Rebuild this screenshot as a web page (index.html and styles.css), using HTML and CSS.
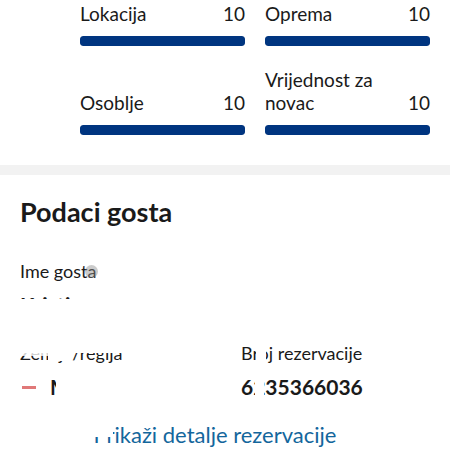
FILE: index.html
```html
<!DOCTYPE html>
<html lang="hr">
<head>
<meta charset="utf-8">
<title>Podaci gosta</title>
<link rel="stylesheet" href="styles.css">
</head>
<body>
<div class="page">
  <section class="ratings">
    <div class="rating">
      <div class="rating-head"><span class="rating-name">Lokacija</span><span class="rating-score">10</span></div>
      <div class="bar"><div class="bar-fill" style="width:100%"></div></div>
    </div>
    <div class="rating">
      <div class="rating-head"><span class="rating-name">Oprema</span><span class="rating-score">10</span></div>
      <div class="bar"><div class="bar-fill" style="width:100%"></div></div>
    </div>
    <div class="rating">
      <div class="rating-head"><span class="rating-name">Osoblje</span><span class="rating-score">10</span></div>
      <div class="bar"><div class="bar-fill" style="width:100%"></div></div>
    </div>
    <div class="rating">
      <div class="rating-head"><span class="rating-name">Vrijednost za novac</span><span class="rating-score">10</span></div>
      <div class="bar"><div class="bar-fill" style="width:100%"></div></div>
    </div>
  </section>

  <div class="divider"></div>

  <section class="guest">
    <h2 class="guest-title">Podaci gosta</h2>
    <div class="details">
      <div class="detail">
        <div class="detail-label">Ime gosta</div>
        <div class="detail-value">Kristina</div>
      </div>
      <div class="detail"></div>
      <div class="detail">
        <div class="detail-label">Zemlja/regija</div>
        <div class="detail-value"><span class="flag"></span>Mađarska</div>
      </div>
      <div class="detail">
        <div class="detail-label">Broj rezervacije</div>
        <div class="detail-value">6235366036</div>
      </div>
    </div>
    <div class="link-row"><a class="details-link" href="#">Prikaži detalje rezervacije</a></div>

    <div class="erase erase-a"></div>
    <div class="erase erase-a2"></div>
    <div class="erase erase-b"></div>
    <div class="erase erase-c"></div>
    <div class="erase erase-d"></div>
    <div class="erase erase-d2"></div>
    <div class="erase erase-e"></div>
    <div class="touch-dot"></div>
  </section>
</div>
</body>
</html>
```

FILE: styles.css
```css
html, body {
  margin: 0;
  padding: 0;
  background: #ffffff;
}

body {
  font-family: Lato, "Liberation Sans", sans-serif;
  color: #1a1a1a;
  width: 450px;
  overflow: hidden;
}

.page {
  position: relative;
}

.ratings {
  display: grid;
  grid-template-columns: 1fr 1fr;
  column-gap: 20px;
  row-gap: 22px;
  padding: 2px 20px 0 80px;
}

.rating {
  display: flex;
  flex-direction: column;
  justify-content: flex-end;
}

.rating-head {
  display: flex;
  justify-content: space-between;
  align-items: flex-end;
  font-size: 19px;
  line-height: 23px;
}

.rating-name {
  padding-right: 24px;
}

.bar {
  margin-top: 11px;
  height: 10px;
  border-radius: 3px;
  background: #e6e6e6;
  overflow: hidden;
}

.bar-fill {
  height: 100%;
  background: #003580;
  border-radius: 3px;
}

.divider {
  margin-top: 30px;
  height: 10px;
  background: #f2f2f2;
}

.guest {
  position: relative;
  padding: 21px 20px 20px;
}

.guest-title {
  margin: 0;
  font-size: 27px;
  line-height: 32px;
  font-weight: 700;
}

.details {
  display: grid;
  grid-template-columns: 1fr 1fr;
  column-gap: 32px;
  row-gap: 22px;
  margin-top: 31px;
}

.detail-label {
  font-size: 18px;
  line-height: 24px;
}

.detail-value {
  margin-top: 8px;
  font-size: 21px;
  line-height: 28px;
  font-weight: 700;
  display: flex;
  align-items: center;
}

.flag {
  display: inline-block;
  width: 14px;
  height: 3px;
  background: #e07878;
  margin: 0 14px 0 2px;
}

.link-row {
  margin-top: 21px;
  padding-right: 20px;
  text-align: center;
}

.details-link {
  font-size: 22px;
  line-height: 26px;
  color: #13669c;
  text-decoration: none;
}

/* white retouch patches over the screenshot */
.erase {
  position: absolute;
  background: #ffffff;
}

.erase-a {
  left: 0;
  top: 124px;
  width: 232px;
  height: 54px;
}

.erase-a2 {
  left: 0;
  top: 170px;
  width: 50px;
  height: 11px;
  background: rgba(255, 255, 255, 0.8);
}

.erase-b {
  left: 48px;
  top: 170px;
  width: 24px;
  height: 16px;
}

.erase-c {
  left: 56px;
  top: 190px;
  width: 176px;
  height: 40px;
}

.erase-d {
  left: 256px;
  top: 168px;
  width: 10px;
  height: 22px;
}

.erase-d2 {
  left: 255px;
  top: 197px;
  width: 9px;
  height: 26px;
}

.erase-e {
  left: 92px;
  top: 246px;
  width: 21px;
  height: 16px;
}

.touch-dot {
  position: absolute;
  left: 85px;
  top: 90px;
  width: 13px;
  height: 13px;
  border-radius: 50%;
  background: rgba(140, 140, 140, 0.45);
}
```
